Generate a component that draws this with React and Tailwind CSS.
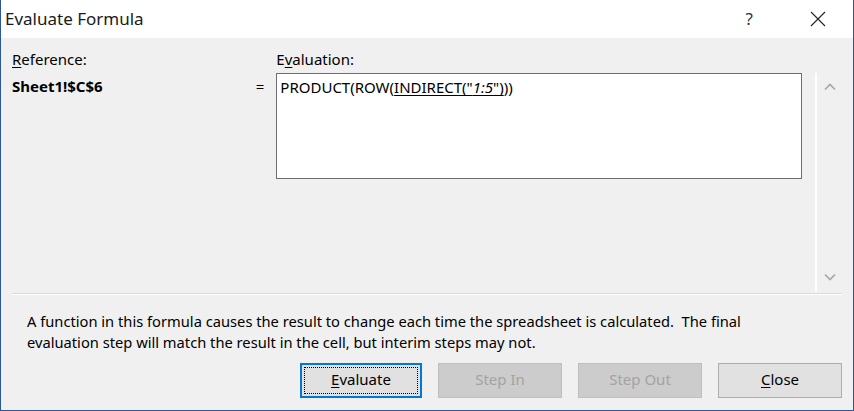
import React from 'react';

const font = { fontFamily: '"Noto Sans", "Open Sans", sans-serif' };

function Chevron({ down }) {
    return (
        <svg width="12" height="8" viewBox="0 0 12 8" className="text-[#a6a6a6]">
            <path d={down ? 'M1 1.5 L6 6.5 L11 1.5' : 'M1 6.5 L6 1.5 L11 6.5'} fill="none" stroke="currentColor" strokeWidth="1.6" />
        </svg>
    );
}

function Button({ children, primary, disabled }) {
    if (primary) {
        return (
            <div className="w-[122px] h-[35px] border-2 border-[#0078d7] bg-[#e1e1e1] p-[2px]">
                <div className="h-full border border-dotted border-black flex items-center justify-center text-[15px] leading-none pb-[2px] text-black">
                    {children}
                </div>
            </div>
        );
    }
    return (
        <div
            className={
                'w-[124px] h-[35px] border flex items-center justify-center text-[15px] leading-none pb-[2px] ' +
                (disabled ? 'border-[#bfbfbf] bg-[#cccccc] text-[#a3a3a3]' : 'border-[#adadad] bg-[#e1e1e1] text-black')
            }
        >
            {children}
        </div>
    );
}

export default function App() {
    return (
        <div style={font} className="w-[854px] h-[411px] flex flex-col border-x border-b border-[#2b579a] bg-[#f0f0f0] text-black">
            {/* title bar */}
            <div className="h-[38px] bg-white flex items-center justify-between shrink-0">
                <span className="pl-[4px] text-[17px] text-[#1a1a1a]">Evaluate Formula</span>
                <div className="flex items-center gap-[57px] pr-[27px]">
                    <span className="text-[17px] text-[#333]">?</span>
                    <svg width="16" height="16" viewBox="0 0 16 16">
                        <path d="M1 1 L15 15 M15 1 L1 15" stroke="#222" strokeWidth="1.1" />
                    </svg>
                </div>
            </div>

            {/* evaluation area */}
            <div className="flex pl-[11px] pr-[10px] pt-[11px]">
                <div className="w-[265px] flex flex-col text-[15px]">
                    <div className="h-[24px] leading-[20px]">
                        <span className="underline underline-offset-2">R</span>eference:
                    </div>
                    <div className="flex justify-between pt-[2px] pr-[12px]">
                        <span className="font-bold">Sheet1!$C$6</span>
                        <span>=</span>
                    </div>
                </div>
                <div className="w-[527px] flex flex-col text-[15px]">
                    <div className="h-[24px] leading-[20px]">
                        E<span className="underline underline-offset-2">v</span>aluation:
                    </div>
                    <div className="h-[106px] border border-[#6e6e6e] bg-white px-[3px] pt-[2px]">
                        PRODUCT(ROW(
                        <span className="underline underline-offset-2">
                            INDIRECT("<span className="italic">1:5</span>")
                        </span>
                        ))
                    </div>
                </div>
                <div className="ml-[13px] w-[28px] h-[218px] mt-[24px] border-l-2 border-white flex flex-col items-center justify-between py-[10px]">
                    <Chevron />
                    <Chevron down />
                </div>
            </div>

            {/* separator */}
            <div className="mx-[11px] mt-[2px] border-t border-[#dadada] border-b border-b-white" />

            {/* message */}
            <div className="pl-[26px] pt-[16px] text-[14.7px] leading-[21px]">
                <p>A function in this formula causes the result to change each time the spreadsheet is calculated.&nbsp; The final</p>
                <p>evaluation step will match the result in the cell, but interim steps may not.</p>
            </div>

            {/* buttons */}
            <div className="flex justify-end gap-[16px] pr-[11px] mt-[10px]">
                <Button primary>
                    <span><span className="underline underline-offset-2">E</span>valuate</span>
                </Button>
                <Button disabled>Step In</Button>
                <Button disabled>Step Out</Button>
                <Button>
                    <span><span className="underline underline-offset-2">C</span>lose</span>
                </Button>
            </div>
        </div>
    );
}
